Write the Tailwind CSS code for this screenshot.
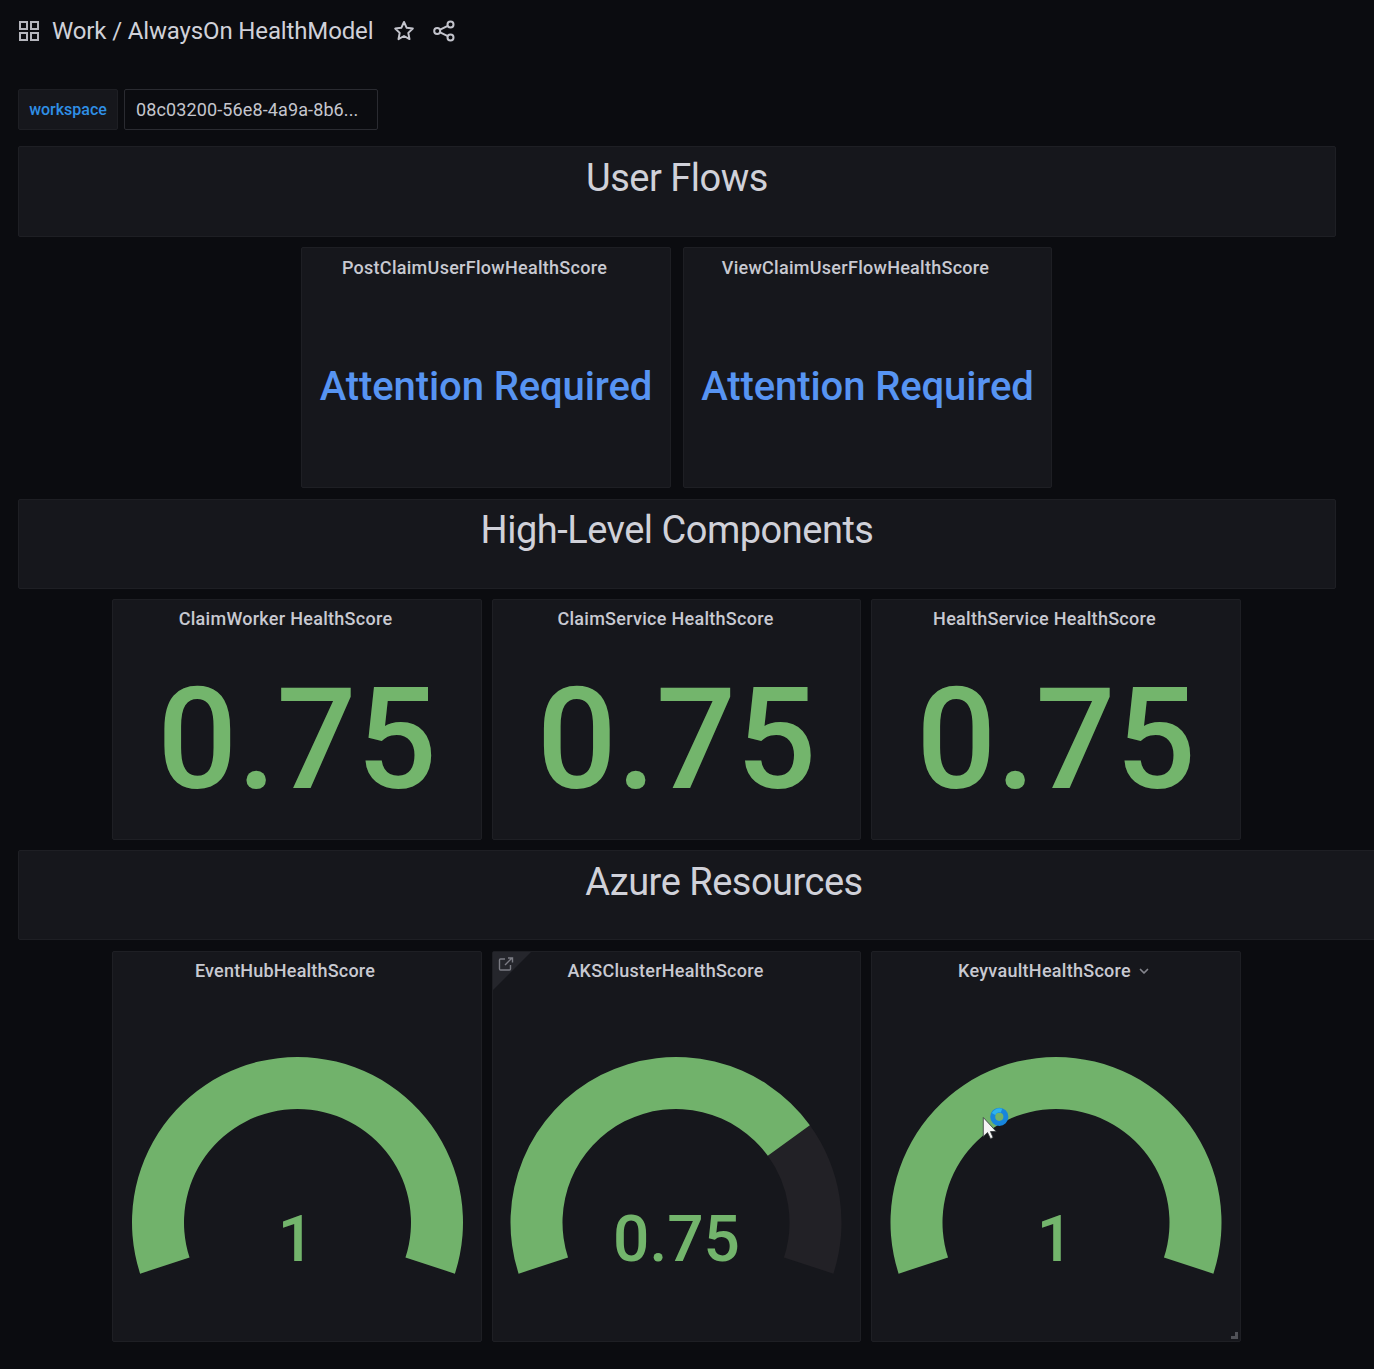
<!DOCTYPE html>
<html lang="en">
<head>
<meta charset="utf-8">
<title>AlwaysOn HealthModel</title>
<script src="https://cdn.jsdelivr.net/npm/@tailwindcss/browser@4"></script>
</head>
<body class="relative h-[1369px] w-[1374px] overflow-hidden bg-[#0b0c10] font-[Roboto,sans-serif] text-[#d0d1d9]">
  <header class="flex h-[62px] items-center pl-[18px]">
    <svg class="size-[22px]" viewBox="0 0 22 22" fill="none" stroke="#b5b6bd" stroke-width="2"><path d="M2 2h7v7H2zM13 2h7v7h-7zM2 13h7v7H2zM13 13h7v7h-7z"/></svg>
    <h1 class="ml-3 w-[322px] text-[24px] leading-[30px] tracking-[-0.14px] whitespace-nowrap">Work / AlwaysOn HealthModel</h1>
    <svg class="ml-[19px] size-[22px]" viewBox="0 0 22 22" fill="none" stroke="#c3c4cc" stroke-width="2" stroke-linejoin="round"><path d="M11 2l2.700 5.800 6.100.8-4.500 4.300 1.200 6.200L11 16l-5.500 3.100 1.200-6.200L2.200 8.600l6.100-.8z"/></svg>
    <svg class="ml-[18px] size-[22px]" viewBox="0 0 22 22" fill="none" stroke="#c3c4cc" stroke-width="2"><circle cx="4.200" cy="11" r="3"/><circle cx="17.500" cy="4.500" r="3"/><circle cx="17.500" cy="17.500" r="3"/><path d="M7.100 9.700l7.700-3.900M7.100 12.300l7.700 3.900"/></svg>
  </header>

  <main class="flex flex-col pt-[27px]">
    <div class="ml-[18px] flex h-[41px] gap-[6px]">
      <div class="flex w-[100px] items-center justify-center rounded-xs border border-[#1e1f24] bg-[#16171c] text-[16px] font-medium text-[#2f8fe6]">workspace</div>
      <div class="flex w-[254px] items-center rounded-xs border border-[#2a2b31] bg-[#0b0c10] pl-[11px] text-[18px] tracking-[0.12px] text-[#c5c6ce]">08c03200-56e8-4a9a-8b6...</div>
    </div>

    <section class="mt-4 ml-[18px] h-[91px] w-[1318px] rounded-xs border border-[#1e1f24] bg-[#16171c] pt-[9px] text-center text-[38px] leading-[44px] tracking-[-0.5px]">User Flows</section>

    <div class="mt-[10px] ml-[301px] flex h-[241px] gap-3">
      <section class="flex w-[370px] flex-col rounded-xs border border-[#1e1f24] bg-[#16171c]">
        <h2 class="w-[345px] pt-[9px] text-center text-[18px] leading-[22px] font-medium tracking-[0.28px] text-[#c8c9d1]">PostClaimUserFlowHealthScore</h2>
        <p class="mt-[84px] text-center text-[40px] leading-[48px] font-medium tracking-[-0.1px] whitespace-nowrap text-[#5794f2]">Attention Required</p>
      </section>
      <section class="flex w-[369px] flex-col rounded-xs border border-[#1e1f24] bg-[#16171c]">
        <h2 class="w-[343px] pt-[9px] text-center text-[18px] leading-[22px] font-medium tracking-[0.28px] text-[#c8c9d1]">ViewClaimUserFlowHealthScore</h2>
        <p class="mt-[84px] text-center text-[40px] leading-[48px] font-medium tracking-[-0.1px] whitespace-nowrap text-[#5794f2]">Attention Required</p>
      </section>
    </div>

    <section class="mt-[11px] ml-[18px] h-[90px] w-[1318px] rounded-xs border border-[#1e1f24] bg-[#16171c] pt-[8px] text-center text-[38px] leading-[44px] tracking-[-0.5px]">High-Level Components</section>

    <div class="mt-[10px] ml-[112px] flex h-[241px] gap-[10px]">
      <section class="w-[370px] rounded-xs border border-[#1e1f24] bg-[#16171c]">
        <h2 class="w-[345px] pt-[8px] text-center text-[18px] leading-[22px] font-medium tracking-[0.28px] text-[#c8c9d1]">ClaimWorker HealthScore</h2>
        <p class="mt-[27px] text-center text-[141px] leading-[166px] font-medium text-[#73b56c]">0.75</p>
      </section>
      <section class="w-[369px] rounded-xs border border-[#1e1f24] bg-[#16171c]">
        <h2 class="w-[345px] pt-[8px] text-center text-[18px] leading-[22px] font-medium tracking-[0.28px] text-[#c8c9d1]">ClaimService HealthScore</h2>
        <p class="mt-[27px] text-center text-[141px] leading-[166px] font-medium text-[#73b56c]">0.75</p>
      </section>
      <section class="w-[370px] rounded-xs border border-[#1e1f24] bg-[#16171c]">
        <h2 class="w-[345px] pt-[8px] text-center text-[18px] leading-[22px] font-medium tracking-[0.28px] text-[#c8c9d1]">HealthService HealthScore</h2>
        <p class="mt-[27px] text-center text-[141px] leading-[166px] font-medium text-[#73b56c]">0.75</p>
      </section>
    </div>

    <section class="mt-[10px] ml-[18px] h-[90px] w-[1412px] rounded-xs border border-[#1e1f24] bg-[#16171c] pt-[9px] text-center text-[38px] leading-[44px] tracking-[-0.5px]">Azure Resources</section>

    <div class="mt-[11px] ml-[112px] flex h-[391px] gap-[10px]">
      <section class="relative w-[370px] rounded-xs border border-[#1e1f24] bg-[#16171c]">
        <h2 class="w-[344px] pt-[8px] text-center text-[18px] leading-[22px] font-medium tracking-[0.2px] text-[#c8c9d1]">EventHubHealthScore</h2>
        <svg class="mt-[74px] ml-[18px] h-[220px] w-[332px]" viewBox="-166.500 -166.500 332 220"><path fill="#71b26b" d="M-157.400 51.140A165.500 165.500 0 1 1 157.400 51.140L107.950 35.070A113.500 113.500 0 1 0 -107.950 35.070Z"/></svg>
        <p class="absolute inset-x-0 top-[250px] pr-[2px] text-center text-[64px] leading-[76px] font-medium text-[#73b56c]">1</p>
      </section>
      <section class="relative w-[369px] rounded-xs border border-[#1e1f24] bg-[#16171c]">
        <svg class="absolute top-0 left-0 size-[38px]" viewBox="0 0 38 38" fill="none"><path fill="#25262c" d="M0 0h38L0 38z"/><path stroke="#7b7c84" stroke-width="1.400" d="M12 7H7.500a1 1 0 0 0-1 1v9a1 1 0 0 0 1 1h9a1 1 0 0 0 1-1v-4M12 13l7-7M15 6h4.500v4.500"/></svg>
        <h2 class="w-[345px] pt-[8px] text-center text-[18px] leading-[22px] font-medium tracking-[0.25px] text-[#c8c9d1]">AKSClusterHealthScore</h2>
        <svg class="mt-[74px] ml-[17px] h-[220px] w-[332px]" viewBox="-166 -166.500 332 220"><path fill="#222126" d="M133.890 -97.280A165.500 165.500 0 0 1 157.400 51.140L107.950 35.070A113.500 113.500 0 0 0 91.820 -66.710Z"/><path fill="#71b26b" d="M-157.400 51.140A165.500 165.500 0 0 1 133.890 -97.280L91.820 -66.710A113.500 113.500 0 0 0 -107.950 35.070Z"/></svg>
        <p class="absolute inset-x-0 top-[250px] text-center text-[64px] leading-[76px] font-medium text-[#73b56c]">0.75</p>
      </section>
      <section class="relative w-[370px] rounded-xs border border-[#1e1f24] bg-[#16171c]">
        <h2 class="flex w-[364px] items-center justify-center gap-[7px] pt-[8px] text-[18px] leading-[22px] font-medium tracking-[0.28px] text-[#c8c9d1]">KeyvaultHealthScore<svg class="size-[12px]" viewBox="0 0 12 12" fill="none" stroke="#85868e" stroke-width="1.700" stroke-linecap="round" stroke-linejoin="round"><path d="M2.500 4.500L6 8l3.500-3.500"/></svg></h2>
        <svg class="mt-[74px] ml-[18px] h-[220px] w-[332px]" viewBox="-166 -166.500 332 220"><path fill="#71b26b" d="M-157.400 51.140A165.500 165.500 0 1 1 157.400 51.140L107.950 35.070A113.500 113.500 0 1 0 -107.950 35.070Z"/></svg>
        <p class="absolute inset-x-0 top-[250px] pr-[2px] text-center text-[64px] leading-[76px] font-medium text-[#73b56c]">1</p>
        <span class="absolute right-[2px] bottom-[2px] size-[7px] border-r-3 border-b-3 border-[#505157]"></span>
      </section>
    </div>
  </main>

  <svg class="absolute top-[1105px] left-[980px] h-[36px] w-[32px]" viewBox="0 0 32 36"><circle cx="19.300" cy="11.800" r="6.600" fill="none" stroke="#1785dc" stroke-width="5"/><path d="M13.500 9a6.600 6.600 0 0 1 8-3.300" fill="none" stroke="#2eb3ee" stroke-width="4"/><path d="M3.300 12.500v19l4.200-4 3 6.200 2.600-1.200-2.700-6h5.800z" fill="#f4f4f4" stroke="#34383a" stroke-width=".8"/></svg>
</body>
</html>
